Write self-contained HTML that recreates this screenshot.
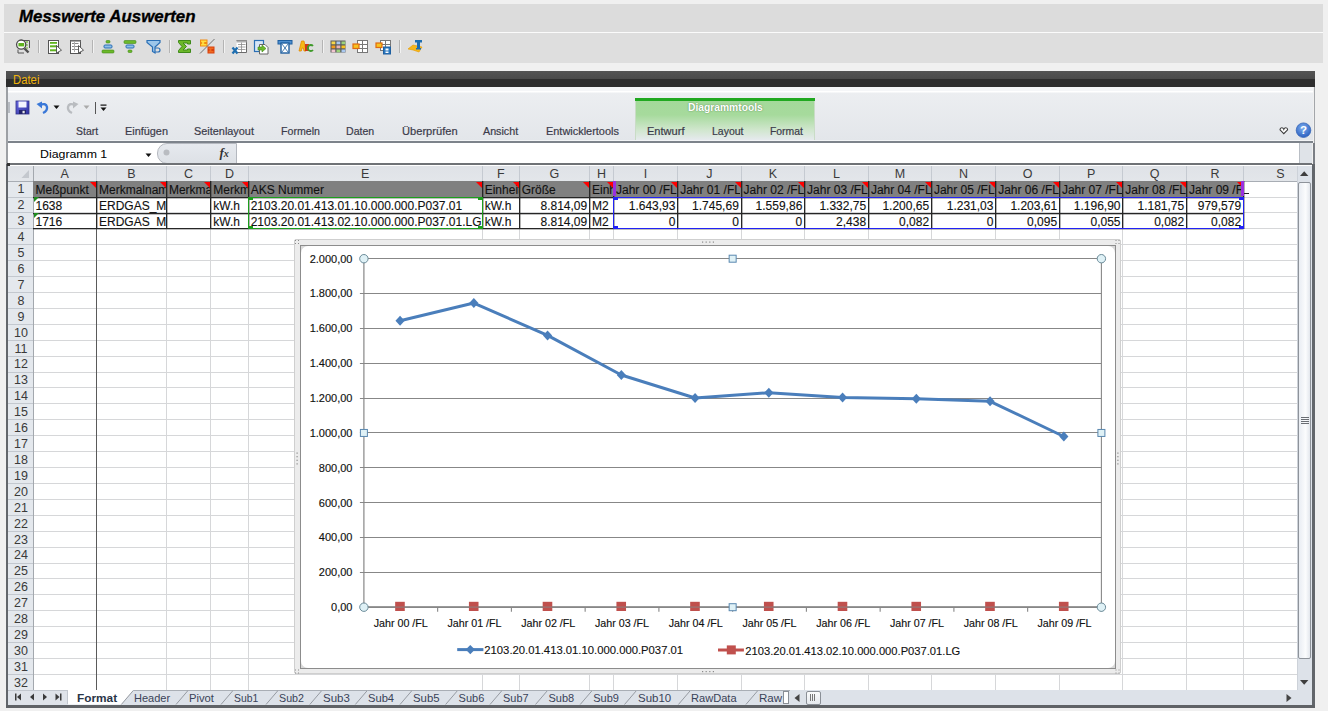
<!DOCTYPE html><html><head><meta charset="utf-8"><style>
html,body{margin:0;padding:0;width:1328px;height:711px;overflow:hidden;background:#f0f0f0}
body{position:relative;font-family:"Liberation Sans",sans-serif}
body>div,body>span,body>svg{position:absolute}
svg{overflow:visible}
</style></head><body>
<div style="left:0.00px;top:0.00px;width:1328.00px;height:711.00px;background:#f0f0f0"></div>
<div style="left:4.00px;top:4.00px;width:1319.00px;height:28.00px;background:#dcdcdc"></div>
<div style="left:4.00px;top:32.00px;width:1319.00px;height:1.00px;background:#fbfbfb"></div>
<div style="left:4.00px;top:33.00px;width:1319.00px;height:30.00px;background:#dedede"></div>
<span style="left:19.00px;top:7.31px;font-size:17px;line-height:18.99px;color:#000;white-space:nowrap;font-weight:bold;font-style:italic;transform:scaleX(0.9921);transform-origin:0 0;-webkit-text-stroke:0.35px #000;">Messwerte Auswerten</span>
<div style="left:37.50px;top:40.00px;width:1.00px;height:13.00px;background:#b4b4b4"></div>
<div style="left:38.50px;top:40.00px;width:1.00px;height:13.00px;background:#f2f2f2"></div>
<div style="left:91.50px;top:40.00px;width:1.00px;height:13.00px;background:#b4b4b4"></div>
<div style="left:92.50px;top:40.00px;width:1.00px;height:13.00px;background:#f2f2f2"></div>
<div style="left:168.50px;top:40.00px;width:1.00px;height:13.00px;background:#b4b4b4"></div>
<div style="left:169.50px;top:40.00px;width:1.00px;height:13.00px;background:#f2f2f2"></div>
<div style="left:222.90px;top:40.00px;width:1.00px;height:13.00px;background:#b4b4b4"></div>
<div style="left:223.90px;top:40.00px;width:1.00px;height:13.00px;background:#f2f2f2"></div>
<div style="left:322.20px;top:40.00px;width:1.00px;height:13.00px;background:#b4b4b4"></div>
<div style="left:323.20px;top:40.00px;width:1.00px;height:13.00px;background:#f2f2f2"></div>
<div style="left:398.50px;top:40.00px;width:1.00px;height:13.00px;background:#b4b4b4"></div>
<div style="left:399.50px;top:40.00px;width:1.00px;height:13.00px;background:#f2f2f2"></div>
<svg style="left:15px;top:39px;" width="16" height="16" viewBox="0 0 16 16"><path d="M6 1.5 H14.5 V9" fill="none" stroke="#555" stroke-width="1"/><line x1="10.5" y1="3" x2="13" y2="3" stroke="#6cb82a" stroke-width="1.2"/><line x1="11" y1="6" x2="13" y2="6" stroke="#6cb82a" stroke-width="1.2"/><line x1="11" y1="9" x2="13" y2="9" stroke="#6cb82a" stroke-width="1.2"/><circle cx="6.2" cy="5.6" r="4.6" fill="#fff" stroke="#4a4a4a" stroke-width="1.3"/><rect x="3.4" y="4" width="5.8" height="3.4" fill="#5fb31e"/><line x1="9.5" y1="9.5" x2="13.5" y2="13.5" stroke="#505050" stroke-width="2.4"/><path d="M3 10.5 V14 H9" fill="none" stroke="#555" stroke-width="1"/></svg>
<svg style="left:47px;top:39px;" width="16" height="16" viewBox="0 0 16 16"><path d="M1.5 1.5 H11.5 V6 M11.5 13 V14.5 H1.5 Z" fill="#fff" stroke="#555" stroke-width="1"/><rect x="1.5" y="1.5" width="10" height="13" fill="#fff" stroke="#555"/><rect x="3" y="3" width="7" height="1.8" fill="#5fb31e"/><rect x="3" y="6.3" width="7" height="2" fill="#5fb31e"/><rect x="3" y="10.3" width="7" height="2" fill="#5fb31e"/><path d="M9.5 6.5 L14.5 11.2 L9.5 14 Z" fill="#fff" stroke="#4a4a4a" stroke-width="0.9"/></svg>
<svg style="left:69px;top:39px;" width="16" height="16" viewBox="0 0 16 16"><rect x="1.5" y="1.5" width="10" height="13" fill="#fff" stroke="#555"/><rect x="1.5" y="1.5" width="10" height="1.2" fill="#888"/><line x1="3" y1="4.5" x2="9.5" y2="4.5" stroke="#8a8a8a"/><line x1="3" y1="7.5" x2="9.5" y2="7.5" stroke="#8a8a8a"/><line x1="3" y1="10.5" x2="9.5" y2="10.5" stroke="#8a8a8a"/><line x1="5.5" y1="3" x2="5.5" y2="13" stroke="#b0b0b0"/><path d="M9.5 6.5 L14.5 11.2 L9.5 14 Z" fill="#fff" stroke="#4a4a4a" stroke-width="0.9"/></svg>
<svg style="left:101px;top:39px;" width="16" height="16" viewBox="0 0 16 16"><rect x="5" y="1.5" width="4" height="2.5" rx="1" fill="#6cb82a" stroke="#3f8a1a" stroke-width="0.6"/><rect x="3" y="6" width="8" height="3" rx="1" fill="#8ec0e8" stroke="#2a6fb5" stroke-width="1"/><rect x="1" y="11" width="12" height="3" rx="1" fill="#6cb82a" stroke="#3f8a1a" stroke-width="0.6"/></svg>
<svg style="left:123px;top:39px;" width="16" height="16" viewBox="0 0 16 16"><rect x="1" y="1.5" width="12" height="3" rx="1" fill="#6cb82a" stroke="#3f8a1a" stroke-width="0.6"/><rect x="3" y="6" width="8" height="3" rx="1" fill="#8ec0e8" stroke="#2a6fb5" stroke-width="1"/><rect x="5" y="11" width="4" height="2.5" rx="1" fill="#6cb82a" stroke="#3f8a1a" stroke-width="0.6"/></svg>
<svg style="left:146px;top:39px;" width="16" height="16" viewBox="0 0 16 16"><path d="M1 1.5 H14 V3.5 L9 8 V14 L6.5 12.5 V8 L1 3.5 Z" fill="#9cc6ea" stroke="#2a6fb5" stroke-width="1.2"/><path d="M9 9 h3 a2 2 0 0 1 0 4 h-3" fill="none" stroke="#2a6fb5" stroke-width="1.2"/></svg>
<svg style="left:177px;top:39px;" width="16" height="16" viewBox="0 0 16 16"><path d="M1.5 1.5 H13.5 V5 H10.5 V4 H6 L9.5 7.5 L6 11 H10.5 V10 H13.5 V13.5 H1.5 V11.5 L5 7.5 L1.5 3.5 Z" fill="#6cb82a" stroke="#3f8a1a" stroke-width="1"/></svg>
<svg style="left:199px;top:38px;" width="16" height="16" viewBox="0 0 16 16"><rect x="1" y="1.5" width="7.5" height="7" fill="#f08a10"/><path d="M2 2.5 H7.5 V4 H4.5 L5.8 5 L4.5 6 H7.5 V7.5 H2 V6.5 L3.5 5 L2 3.5 Z" fill="#ffe040"/><rect x="8.5" y="8.5" width="7" height="7" fill="#d8400c"/><path d="M9.5 9.5 H14.5 V11 H11.8 L13 12 L11.8 13 H14.5 V14.5 H9.5 V13.5 L11 12 L9.5 10.5 Z" fill="#f06a20"/><line x1="1" y1="15.5" x2="15.5" y2="1" stroke="#555" stroke-width="0.8"/></svg>
<svg style="left:231px;top:39px;" width="16" height="16" viewBox="0 0 16 16"><path d="M5.5 1.5 H15.5 V13.5 H5.5" fill="#fff" stroke="#6a6a6a"/><rect x="5.5" y="1.5" width="10" height="2" fill="#b0b0b0"/><line x1="7" y1="5.5" x2="14.5" y2="5.5" stroke="#8a8a8a" stroke-width="0.8"/><line x1="7" y1="8" x2="14.5" y2="8" stroke="#8a8a8a" stroke-width="0.8"/><line x1="7" y1="10.5" x2="14.5" y2="10.5" stroke="#8a8a8a" stroke-width="0.8"/><line x1="10.5" y1="3.5" x2="10.5" y2="13" stroke="#8a8a8a" stroke-width="0.8"/><path d="M1.5 8.5 L6.5 14.5 M6.5 8.5 L1.5 14.5" stroke="#1e6eb0" stroke-width="2.3"/></svg>
<svg style="left:253px;top:39px;" width="16" height="16" viewBox="0 0 16 16"><rect x="1.5" y="1.5" width="9" height="11" fill="#d7e6f5" stroke="#2a6fb5" stroke-width="1.2"/><path d="M6.5 5.5 H12 L15 8.5 V15 H6.5 Z" fill="#fff" stroke="#666"/><path d="M5 8 H9 V6 L13 9.5 L9 13 V11 H5 Z" fill="#6cb82a" stroke="#3f8a1a" stroke-width="0.6"/></svg>
<svg style="left:277px;top:39px;" width="16" height="16" viewBox="0 0 16 16"><rect x="1" y="1.5" width="14" height="3.5" fill="#4f8fcf" stroke="#1e5fa0" stroke-width="1"/><rect x="4" y="4" width="8" height="10" fill="#fff" stroke="#1e5fa0" stroke-width="1.4"/><path d="M5 5 L11 13 M11 5 L5 13" stroke="#1e5fa0" stroke-width="0.8"/></svg>
<svg style="left:298px;top:39px;" width="16" height="16" viewBox="0 0 16 16"><path d="M1 12 L3.5 2 H6 L8 12 H6 L5.3 9 H4 L3.3 12 Z" fill="#f5b915" stroke="#e58a00" stroke-width="0.8"/><rect x="7" y="5" width="4" height="7" fill="#d0391a"/><path d="M15 7 a3 3 0 1 0 0 4" fill="none" stroke="#3f9a2a" stroke-width="1.8"/></svg>
<svg style="left:330px;top:39px;" width="16" height="16" viewBox="0 0 16 16"><rect x="0.5" y="1.5" width="15" height="12" fill="#5a5a5a"/><rect x="1.5" y="2.5" width="3.8" height="2.8" fill="#f7d84a"/><rect x="6.5" y="2.5" width="3.8" height="2.8" fill="#a9c8ef"/><rect x="11.5" y="2.5" width="3.8" height="2.8" fill="#9dd27a"/><rect x="1.5" y="6.5" width="3.8" height="2.8" fill="#f39a1a"/><rect x="6.5" y="6.5" width="3.8" height="2.8" fill="#e9b3b3"/><rect x="11.5" y="6.5" width="3.8" height="2.8" fill="#f7c320"/><rect x="1.5" y="10.5" width="3.8" height="2.8" fill="#f1c6d0"/><rect x="6.5" y="10.5" width="3.8" height="2.8" fill="#9dd27a"/><rect x="11.5" y="10.5" width="3.8" height="2.8" fill="#a9c8ef"/></svg>
<svg style="left:352px;top:39px;" width="16" height="16" viewBox="0 0 16 16"><rect x="5.5" y="1.5" width="10" height="12" fill="#fff" stroke="#777"/><line x1="10.5" y1="1.5" x2="10.5" y2="13.5" stroke="#777"/><line x1="5.5" y1="5.5" x2="15.5" y2="5.5" stroke="#777"/><line x1="5.5" y1="9.5" x2="15.5" y2="9.5" stroke="#777"/><rect x="1" y="5" width="6" height="4.5" fill="#f7c320" stroke="#e06a10" stroke-width="1.2"/></svg>
<svg style="left:375px;top:39px;" width="16" height="16" viewBox="0 0 16 16"><rect x="5.5" y="1.5" width="10" height="10" fill="#fff" stroke="#777"/><line x1="10.5" y1="1.5" x2="10.5" y2="11.5" stroke="#777"/><line x1="5.5" y1="5.5" x2="15.5" y2="5.5" stroke="#777"/><rect x="1" y="4" width="6" height="4.5" fill="#f7c320" stroke="#e06a10" stroke-width="1.2"/><rect x="8.5" y="8" width="7" height="7" fill="#2a78c0" stroke="#1e5fa0"/><rect x="10.5" y="9.5" width="3" height="2" fill="#fff"/><rect x="10.5" y="12.5" width="3" height="1.5" fill="#fff"/></svg>
<svg style="left:407px;top:39px;" width="16" height="16" viewBox="0 0 16 16"><path d="M1 10 L6 6 L15 8 L12 13 L6 11 Z" fill="#f7b71a" stroke="#e59a00" stroke-width="0.6"/><rect x="8" y="1" width="7" height="2.5" fill="#1e6eb0"/><rect x="10" y="1" width="3" height="9" fill="#1e6eb0"/><rect x="9" y="9" width="5" height="1.5" fill="#1e6eb0"/></svg>
<div style="left:6.00px;top:71.00px;width:1309.00px;height:16.00px;background:linear-gradient(#545454 0,#4a4a4a 50%,#2e2e2e 50%,#2e2e2e 100%)"></div>
<span style="left:12.70px;top:73.74px;font-size:12px;line-height:13.40px;color:#f0b40c;white-space:nowrap;transform:scaleX(0.9423);transform-origin:0 0;">Datei</span>
<div style="left:6.00px;top:87.00px;width:2.00px;height:77.00px;background:#9da0a4"></div>
<div style="left:6.00px;top:164.00px;width:2.50px;height:543.50px;background:#62666b"></div>
<div style="left:8.00px;top:87.00px;width:1305.00px;height:54.00px;background:linear-gradient(#f5f6f8 0,#f5f6f8 4px,#ffffff 4px,#ffffff 5px,#eceef1 6px,#e3e6ea 100%)"></div>
<div style="left:1313.50px;top:87.00px;width:1.80px;height:56.00px;background:#a3a6aa"></div>
<div style="left:1313.00px;top:143.00px;width:2.00px;height:21.00px;background:#7a7e84"></div>
<div style="left:1312.00px;top:164.00px;width:3.00px;height:543.50px;background:#62666b"></div>
<div style="left:8.00px;top:140.00px;width:1305.00px;height:1.00px;background:#f2f4f6"></div>
<div style="left:8.00px;top:141.30px;width:1305.00px;height:2.20px;background:#7d838b"></div>
<div style="left:8.00px;top:102.00px;width:1.50px;height:11.00px;background:#b8bcc2"></div>
<svg style="left:15px;top:100px;" width="15" height="15" viewBox="0 0 15 15"><defs><linearGradient id="fg" x1="0" y1="0" x2="1" y2="1"><stop offset="0" stop-color="#6a6ae0"/><stop offset="1" stop-color="#2e30a0"/></linearGradient></defs><rect x="1" y="1" width="13" height="13" fill="url(#fg)" stroke="#30308a" stroke-width="0.8"/><rect x="3.5" y="1.5" width="8" height="6" fill="#f4f4ff"/><rect x="4" y="10" width="7" height="4" fill="#22226a"/><rect x="7.5" y="10.8" width="2.2" height="2.5" fill="#e6e6e6"/></svg>
<svg style="left:36px;top:101px;" width="14" height="13" viewBox="0 0 14 13"><path d="M4 4 Q10 1.5 11 6 Q11.5 10 7 12" fill="none" stroke="#3a78d8" stroke-width="2.4"/><path d="M0.5 3 L6 0.5 L6 7.5 Z" fill="#3a78d8"/></svg>
<svg style="left:53px;top:105px;" width="7" height="5" viewBox="0 0 7 5"><path d="M0.5 0.5 H6.5 L3.5 4 Z" fill="#111"/></svg>
<svg style="left:65px;top:101px;" width="14" height="13" viewBox="0 0 14 13"><path d="M10 4 Q4 1.5 3 6 Q2.5 10 7 12" fill="none" stroke="#b9bcc0" stroke-width="2.4"/><path d="M13.5 3 L8 0.5 L8 7.5 Z" fill="#b9bcc0"/></svg>
<svg style="left:83px;top:105px;" width="7" height="5" viewBox="0 0 7 5"><path d="M0.5 0.5 H6.5 L3.5 4 Z" fill="#aaa"/></svg>
<div style="left:95.30px;top:102.00px;width:1.00px;height:12.00px;background:#555"></div>
<svg style="left:100px;top:104px;" width="8" height="9" viewBox="0 0 8 9"><rect x="0.5" y="0.5" width="6" height="1.2" fill="#111"/><path d="M0.5 3.5 H6.5 L3.5 7 Z" fill="#111"/></svg>
<span style="left:76.20px;top:124.64px;font-size:11px;line-height:12.29px;color:#3b3b4a;white-space:nowrap;transform:scaleX(0.9505);transform-origin:0 0;-webkit-text-stroke:0.2px #3b3b4a;">Start</span>
<span style="left:124.70px;top:124.64px;font-size:11px;line-height:12.29px;color:#3b3b4a;white-space:nowrap;transform:scaleX(0.9892);transform-origin:0 0;-webkit-text-stroke:0.2px #3b3b4a;">Einfügen</span>
<span style="left:194.20px;top:124.64px;font-size:11px;line-height:12.29px;color:#3b3b4a;white-space:nowrap;transform:scaleX(0.9902);transform-origin:0 0;-webkit-text-stroke:0.2px #3b3b4a;">Seitenlayout</span>
<span style="left:280.60px;top:124.64px;font-size:11px;line-height:12.29px;color:#3b3b4a;white-space:nowrap;transform:scaleX(0.9642);transform-origin:0 0;-webkit-text-stroke:0.2px #3b3b4a;">Formeln</span>
<span style="left:346.30px;top:124.64px;font-size:11px;line-height:12.29px;color:#3b3b4a;white-space:nowrap;transform:scaleX(0.9600);transform-origin:0 0;-webkit-text-stroke:0.2px #3b3b4a;">Daten</span>
<span style="left:401.60px;top:124.64px;font-size:11px;line-height:12.29px;color:#3b3b4a;white-space:nowrap;transform:scaleX(1.0098);transform-origin:0 0;-webkit-text-stroke:0.2px #3b3b4a;">Überprüfen</span>
<span style="left:483.40px;top:124.64px;font-size:11px;line-height:12.29px;color:#3b3b4a;white-space:nowrap;transform:scaleX(0.9752);transform-origin:0 0;-webkit-text-stroke:0.2px #3b3b4a;">Ansicht</span>
<span style="left:545.70px;top:124.64px;font-size:11px;line-height:12.29px;color:#3b3b4a;white-space:nowrap;transform:scaleX(0.9935);transform-origin:0 0;-webkit-text-stroke:0.2px #3b3b4a;">Entwicklertools</span>
<div style="left:635.00px;top:97.50px;width:180.00px;height:42.00px;background:linear-gradient(#a3d99a 0,#a6da9c 40%,#cfe6cc 75%,#e6eaee 100%);border-left:1px solid #c9dcc6;border-right:1px solid #c9dcc6;box-sizing:border-box"></div>
<div style="left:635.00px;top:97.50px;width:180.00px;height:3.20px;background:#20a820"></div>
<span style="left:687.50px;top:101.70px;font-size:10.5px;line-height:11.73px;color:#ffffff;white-space:nowrap;font-weight:bold;transform:scaleX(0.9784);transform-origin:0 0;text-shadow:0 0 1.5px #4a7a40;">Diagrammtools</span>
<span style="left:647.40px;top:124.64px;font-size:11px;line-height:12.29px;color:#3b3b4a;white-space:nowrap;transform:scaleX(1.0050);transform-origin:0 0;-webkit-text-stroke:0.2px #3b3b4a;">Entwurf</span>
<span style="left:711.80px;top:124.64px;font-size:11px;line-height:12.29px;color:#3b3b4a;white-space:nowrap;transform:scaleX(0.9527);transform-origin:0 0;-webkit-text-stroke:0.2px #3b3b4a;">Layout</span>
<span style="left:770.40px;top:124.64px;font-size:11px;line-height:12.29px;color:#3b3b4a;white-space:nowrap;transform:scaleX(0.9442);transform-origin:0 0;-webkit-text-stroke:0.2px #3b3b4a;">Format</span>
<svg style="left:1278.5px;top:126.5px;" width="10" height="8" viewBox="0 0 10 8"><path d="M1 2.8 Q1 0.8 2.8 0.8 Q4.2 0.8 4.8 2.4 Q5.4 0.8 6.8 0.8 Q8.6 0.8 8.6 2.8 L4.8 6.6 Z" fill="#fff" stroke="#3a3a3a" stroke-width="1.1"/></svg>
<svg style="left:1295px;top:121px;" width="18" height="18" viewBox="0 0 18 18"><defs><radialGradient id="hg" cx="45%" cy="35%" r="65%"><stop offset="0" stop-color="#7fb0f0"/><stop offset="1" stop-color="#2a5fc0"/></radialGradient></defs><circle cx="8.5" cy="9.2" r="7.3" fill="url(#hg)" stroke="#3a68b8" stroke-width="0.8"/><text x="8.5" y="13.4" font-family="Liberation Sans" font-weight="bold" font-size="11.5" fill="#fff" text-anchor="middle">?</text></svg>
<div style="left:8.00px;top:143.00px;width:1291.00px;height:20.00px;background:#fff"></div>
<div style="left:1299.00px;top:143.00px;width:13.00px;height:20.00px;background:#dfe3e8;border-left:1px solid #b9bec5;box-sizing:border-box"></div>
<span style="left:39.80px;top:147.77px;font-size:11.3px;line-height:12.62px;color:#000;white-space:nowrap;transform:scaleX(1.0924);transform-origin:0 0;">Diagramm 1</span>
<svg style="left:145px;top:153px;" width="7" height="5" viewBox="0 0 7 5"><path d="M0.5 0.5 H6.5 L3.5 4 Z" fill="#111"/></svg>
<div style="left:157.20px;top:143.00px;width:79.40px;height:20.50px;background:linear-gradient(#e6e9ee,#dde1e6);border:1px solid #b4b8bf;border-radius:10px 0 0 10px;box-sizing:border-box"></div>
<svg style="left:162px;top:148px;" width="9" height="9" viewBox="0 0 9 9"><circle cx="4.5" cy="4.5" r="3" fill="#b9bcc1"/></svg>
<span style="left:219.5px;top:145.5px;font-family:'Liberation Serif',serif;font-style:italic;font-weight:bold;font-size:13px;line-height:14px;color:#333">f<span style="font-size:10px;position:static">x</span></span>
<div style="left:8.00px;top:163.00px;width:1304.00px;height:1.60px;background:#6f7276"></div>
<div style="left:8.00px;top:164.60px;width:1304.00px;height:1.00px;background:#fff"></div>
<div style="left:33.00px;top:181.30px;width:1264.30px;height:508.70px;background:#fff"></div>
<div style="left:8.00px;top:165.60px;width:1289.30px;height:15.70px;background:linear-gradient(#dfe2e7,#e3e6ea)"></div>
<div style="left:8.00px;top:181.30px;width:25.00px;height:508.70px;background:#e4e8ed"></div>
<div style="left:33.00px;top:197.00px;width:1264.30px;height:1.00px;background:#d6d7d9"></div>
<div style="left:8.00px;top:197.00px;width:25.00px;height:1.00px;background:#c3c8cf"></div>
<div style="left:33.00px;top:212.00px;width:1264.30px;height:1.00px;background:#d6d7d9"></div>
<div style="left:8.00px;top:212.00px;width:25.00px;height:1.00px;background:#c3c8cf"></div>
<div style="left:33.00px;top:228.00px;width:1264.30px;height:1.00px;background:#d6d7d9"></div>
<div style="left:8.00px;top:228.00px;width:25.00px;height:1.00px;background:#c3c8cf"></div>
<div style="left:33.00px;top:244.00px;width:1264.30px;height:1.00px;background:#d6d7d9"></div>
<div style="left:8.00px;top:244.00px;width:25.00px;height:1.00px;background:#c3c8cf"></div>
<div style="left:33.00px;top:260.00px;width:1264.30px;height:1.00px;background:#d6d7d9"></div>
<div style="left:8.00px;top:260.00px;width:25.00px;height:1.00px;background:#c3c8cf"></div>
<div style="left:33.00px;top:276.00px;width:1264.30px;height:1.00px;background:#d6d7d9"></div>
<div style="left:8.00px;top:276.00px;width:25.00px;height:1.00px;background:#c3c8cf"></div>
<div style="left:33.00px;top:292.00px;width:1264.30px;height:1.00px;background:#d6d7d9"></div>
<div style="left:8.00px;top:292.00px;width:25.00px;height:1.00px;background:#c3c8cf"></div>
<div style="left:33.00px;top:308.00px;width:1264.30px;height:1.00px;background:#d6d7d9"></div>
<div style="left:8.00px;top:308.00px;width:25.00px;height:1.00px;background:#c3c8cf"></div>
<div style="left:33.00px;top:324.00px;width:1264.30px;height:1.00px;background:#d6d7d9"></div>
<div style="left:8.00px;top:324.00px;width:25.00px;height:1.00px;background:#c3c8cf"></div>
<div style="left:33.00px;top:340.00px;width:1264.30px;height:1.00px;background:#d6d7d9"></div>
<div style="left:8.00px;top:340.00px;width:25.00px;height:1.00px;background:#c3c8cf"></div>
<div style="left:33.00px;top:356.00px;width:1264.30px;height:1.00px;background:#d6d7d9"></div>
<div style="left:8.00px;top:356.00px;width:25.00px;height:1.00px;background:#c3c8cf"></div>
<div style="left:33.00px;top:372.00px;width:1264.30px;height:1.00px;background:#d6d7d9"></div>
<div style="left:8.00px;top:372.00px;width:25.00px;height:1.00px;background:#c3c8cf"></div>
<div style="left:33.00px;top:387.00px;width:1264.30px;height:1.00px;background:#d6d7d9"></div>
<div style="left:8.00px;top:387.00px;width:25.00px;height:1.00px;background:#c3c8cf"></div>
<div style="left:33.00px;top:403.00px;width:1264.30px;height:1.00px;background:#d6d7d9"></div>
<div style="left:8.00px;top:403.00px;width:25.00px;height:1.00px;background:#c3c8cf"></div>
<div style="left:33.00px;top:419.00px;width:1264.30px;height:1.00px;background:#d6d7d9"></div>
<div style="left:8.00px;top:419.00px;width:25.00px;height:1.00px;background:#c3c8cf"></div>
<div style="left:33.00px;top:435.00px;width:1264.30px;height:1.00px;background:#d6d7d9"></div>
<div style="left:8.00px;top:435.00px;width:25.00px;height:1.00px;background:#c3c8cf"></div>
<div style="left:33.00px;top:451.00px;width:1264.30px;height:1.00px;background:#d6d7d9"></div>
<div style="left:8.00px;top:451.00px;width:25.00px;height:1.00px;background:#c3c8cf"></div>
<div style="left:33.00px;top:467.00px;width:1264.30px;height:1.00px;background:#d6d7d9"></div>
<div style="left:8.00px;top:467.00px;width:25.00px;height:1.00px;background:#c3c8cf"></div>
<div style="left:33.00px;top:483.00px;width:1264.30px;height:1.00px;background:#d6d7d9"></div>
<div style="left:8.00px;top:483.00px;width:25.00px;height:1.00px;background:#c3c8cf"></div>
<div style="left:33.00px;top:499.00px;width:1264.30px;height:1.00px;background:#d6d7d9"></div>
<div style="left:8.00px;top:499.00px;width:25.00px;height:1.00px;background:#c3c8cf"></div>
<div style="left:33.00px;top:515.00px;width:1264.30px;height:1.00px;background:#d6d7d9"></div>
<div style="left:8.00px;top:515.00px;width:25.00px;height:1.00px;background:#c3c8cf"></div>
<div style="left:33.00px;top:531.00px;width:1264.30px;height:1.00px;background:#d6d7d9"></div>
<div style="left:8.00px;top:531.00px;width:25.00px;height:1.00px;background:#c3c8cf"></div>
<div style="left:33.00px;top:547.00px;width:1264.30px;height:1.00px;background:#d6d7d9"></div>
<div style="left:8.00px;top:547.00px;width:25.00px;height:1.00px;background:#c3c8cf"></div>
<div style="left:33.00px;top:563.00px;width:1264.30px;height:1.00px;background:#d6d7d9"></div>
<div style="left:8.00px;top:563.00px;width:25.00px;height:1.00px;background:#c3c8cf"></div>
<div style="left:33.00px;top:578.00px;width:1264.30px;height:1.00px;background:#d6d7d9"></div>
<div style="left:8.00px;top:578.00px;width:25.00px;height:1.00px;background:#c3c8cf"></div>
<div style="left:33.00px;top:594.00px;width:1264.30px;height:1.00px;background:#d6d7d9"></div>
<div style="left:8.00px;top:594.00px;width:25.00px;height:1.00px;background:#c3c8cf"></div>
<div style="left:33.00px;top:610.00px;width:1264.30px;height:1.00px;background:#d6d7d9"></div>
<div style="left:8.00px;top:610.00px;width:25.00px;height:1.00px;background:#c3c8cf"></div>
<div style="left:33.00px;top:626.00px;width:1264.30px;height:1.00px;background:#d6d7d9"></div>
<div style="left:8.00px;top:626.00px;width:25.00px;height:1.00px;background:#c3c8cf"></div>
<div style="left:33.00px;top:642.00px;width:1264.30px;height:1.00px;background:#d6d7d9"></div>
<div style="left:8.00px;top:642.00px;width:25.00px;height:1.00px;background:#c3c8cf"></div>
<div style="left:33.00px;top:658.00px;width:1264.30px;height:1.00px;background:#d6d7d9"></div>
<div style="left:8.00px;top:658.00px;width:25.00px;height:1.00px;background:#c3c8cf"></div>
<div style="left:33.00px;top:674.00px;width:1264.30px;height:1.00px;background:#d6d7d9"></div>
<div style="left:8.00px;top:674.00px;width:25.00px;height:1.00px;background:#c3c8cf"></div>
<div style="left:33.00px;top:690.00px;width:1264.30px;height:1.00px;background:#d6d7d9"></div>
<div style="left:8.00px;top:690.00px;width:25.00px;height:1.00px;background:#c3c8cf"></div>
<div style="left:96.00px;top:181.30px;width:1.00px;height:508.70px;background:#d6d7d9"></div>
<div style="left:165.90px;top:181.30px;width:1.00px;height:508.70px;background:#d6d7d9"></div>
<div style="left:210.30px;top:181.30px;width:1.00px;height:508.70px;background:#d6d7d9"></div>
<div style="left:247.70px;top:181.30px;width:1.00px;height:508.70px;background:#d6d7d9"></div>
<div style="left:481.70px;top:181.30px;width:1.00px;height:508.70px;background:#d6d7d9"></div>
<div style="left:518.80px;top:181.30px;width:1.00px;height:508.70px;background:#d6d7d9"></div>
<div style="left:589.00px;top:181.30px;width:1.00px;height:508.70px;background:#d6d7d9"></div>
<div style="left:613.00px;top:181.30px;width:1.00px;height:508.70px;background:#d6d7d9"></div>
<div style="left:677.20px;top:181.30px;width:1.00px;height:508.70px;background:#d6d7d9"></div>
<div style="left:740.60px;top:181.30px;width:1.00px;height:508.70px;background:#d6d7d9"></div>
<div style="left:804.10px;top:181.30px;width:1.00px;height:508.70px;background:#d6d7d9"></div>
<div style="left:867.90px;top:181.30px;width:1.00px;height:508.70px;background:#d6d7d9"></div>
<div style="left:930.90px;top:181.30px;width:1.00px;height:508.70px;background:#d6d7d9"></div>
<div style="left:995.20px;top:181.30px;width:1.00px;height:508.70px;background:#d6d7d9"></div>
<div style="left:1058.90px;top:181.30px;width:1.00px;height:508.70px;background:#d6d7d9"></div>
<div style="left:1122.30px;top:181.30px;width:1.00px;height:508.70px;background:#d6d7d9"></div>
<div style="left:1186.00px;top:181.30px;width:1.00px;height:508.70px;background:#d6d7d9"></div>
<div style="left:1242.90px;top:181.30px;width:1.00px;height:508.70px;background:#d6d7d9"></div>
<div style="left:96.00px;top:166.00px;width:1.00px;height:15.30px;background:#c5cad1"></div>
<div style="left:165.90px;top:166.00px;width:1.00px;height:15.30px;background:#c5cad1"></div>
<div style="left:210.30px;top:166.00px;width:1.00px;height:15.30px;background:#c5cad1"></div>
<div style="left:247.70px;top:166.00px;width:1.00px;height:15.30px;background:#c5cad1"></div>
<div style="left:481.70px;top:166.00px;width:1.00px;height:15.30px;background:#c5cad1"></div>
<div style="left:518.80px;top:166.00px;width:1.00px;height:15.30px;background:#c5cad1"></div>
<div style="left:589.00px;top:166.00px;width:1.00px;height:15.30px;background:#c5cad1"></div>
<div style="left:613.00px;top:166.00px;width:1.00px;height:15.30px;background:#c5cad1"></div>
<div style="left:677.20px;top:166.00px;width:1.00px;height:15.30px;background:#c5cad1"></div>
<div style="left:740.60px;top:166.00px;width:1.00px;height:15.30px;background:#c5cad1"></div>
<div style="left:804.10px;top:166.00px;width:1.00px;height:15.30px;background:#c5cad1"></div>
<div style="left:867.90px;top:166.00px;width:1.00px;height:15.30px;background:#c5cad1"></div>
<div style="left:930.90px;top:166.00px;width:1.00px;height:15.30px;background:#c5cad1"></div>
<div style="left:995.20px;top:166.00px;width:1.00px;height:15.30px;background:#c5cad1"></div>
<div style="left:1058.90px;top:166.00px;width:1.00px;height:15.30px;background:#c5cad1"></div>
<div style="left:1122.30px;top:166.00px;width:1.00px;height:15.30px;background:#c5cad1"></div>
<div style="left:1186.00px;top:166.00px;width:1.00px;height:15.30px;background:#c5cad1"></div>
<div style="left:1242.90px;top:166.00px;width:1.00px;height:15.30px;background:#c5cad1"></div>
<div style="left:32.50px;top:165.60px;width:1.00px;height:524.40px;background:#a3a8ae"></div>
<div style="left:8.00px;top:180.80px;width:1289.00px;height:1.00px;background:#a8adb4"></div>
<svg style="left:21px;top:169px;" width="9" height="10" viewBox="0 0 9 10"><path d="M8 1 V9 H0.5 Z" fill="#c4c8ce"/></svg>
<div style="left:7.00px;top:163.00px;width:2.50px;height:3.00px;background:#333"></div>
<span style="left:60.58px;top:168.29px;font-size:12.5px;line-height:13.96px;color:#3a3a3a;white-space:nowrap;">A</span>
<span style="left:127.28px;top:168.29px;font-size:12.5px;line-height:13.96px;color:#3a3a3a;white-space:nowrap;">B</span>
<span style="left:184.08px;top:168.29px;font-size:12.5px;line-height:13.96px;color:#3a3a3a;white-space:nowrap;">C</span>
<span style="left:224.98px;top:168.29px;font-size:12.5px;line-height:13.96px;color:#3a3a3a;white-space:nowrap;">D</span>
<span style="left:361.03px;top:168.29px;font-size:12.5px;line-height:13.96px;color:#3a3a3a;white-space:nowrap;">E</span>
<span style="left:496.93px;top:168.29px;font-size:12.5px;line-height:13.96px;color:#3a3a3a;white-space:nowrap;">F</span>
<span style="left:549.54px;top:168.29px;font-size:12.5px;line-height:13.96px;color:#3a3a3a;white-space:nowrap;">G</span>
<span style="left:596.98px;top:168.29px;font-size:12.5px;line-height:13.96px;color:#3a3a3a;white-space:nowrap;">H</span>
<span style="left:643.87px;top:168.29px;font-size:12.5px;line-height:13.96px;color:#3a3a3a;white-space:nowrap;">I</span>
<span style="left:706.28px;top:168.29px;font-size:12.5px;line-height:13.96px;color:#3a3a3a;white-space:nowrap;">J</span>
<span style="left:768.68px;top:168.29px;font-size:12.5px;line-height:13.96px;color:#3a3a3a;white-space:nowrap;">K</span>
<span style="left:833.02px;top:168.29px;font-size:12.5px;line-height:13.96px;color:#3a3a3a;white-space:nowrap;">L</span>
<span style="left:894.70px;top:168.29px;font-size:12.5px;line-height:13.96px;color:#3a3a3a;white-space:nowrap;">M</span>
<span style="left:959.03px;top:168.29px;font-size:12.5px;line-height:13.96px;color:#3a3a3a;white-space:nowrap;">N</span>
<span style="left:1022.69px;top:168.29px;font-size:12.5px;line-height:13.96px;color:#3a3a3a;white-space:nowrap;">O</span>
<span style="left:1086.93px;top:168.29px;font-size:12.5px;line-height:13.96px;color:#3a3a3a;white-space:nowrap;">P</span>
<span style="left:1149.79px;top:168.29px;font-size:12.5px;line-height:13.96px;color:#3a3a3a;white-space:nowrap;">Q</span>
<span style="left:1210.43px;top:168.29px;font-size:12.5px;line-height:13.96px;color:#3a3a3a;white-space:nowrap;">R</span>
<span style="left:1276.33px;top:168.29px;font-size:12.5px;line-height:13.96px;color:#3a3a3a;white-space:nowrap;">S</span>
<span style="left:17.52px;top:183.39px;font-size:12.5px;line-height:13.96px;color:#3a3a3a;white-space:nowrap;">1</span>
<span style="left:17.52px;top:199.31px;font-size:12.5px;line-height:13.96px;color:#3a3a3a;white-space:nowrap;">2</span>
<span style="left:17.52px;top:215.22px;font-size:12.5px;line-height:13.96px;color:#3a3a3a;white-space:nowrap;">3</span>
<span style="left:17.52px;top:231.14px;font-size:12.5px;line-height:13.96px;color:#3a3a3a;white-space:nowrap;">4</span>
<span style="left:17.52px;top:247.05px;font-size:12.5px;line-height:13.96px;color:#3a3a3a;white-space:nowrap;">5</span>
<span style="left:17.52px;top:262.97px;font-size:12.5px;line-height:13.96px;color:#3a3a3a;white-space:nowrap;">6</span>
<span style="left:17.52px;top:278.88px;font-size:12.5px;line-height:13.96px;color:#3a3a3a;white-space:nowrap;">7</span>
<span style="left:17.52px;top:294.80px;font-size:12.5px;line-height:13.96px;color:#3a3a3a;white-space:nowrap;">8</span>
<span style="left:17.52px;top:310.71px;font-size:12.5px;line-height:13.96px;color:#3a3a3a;white-space:nowrap;">9</span>
<span style="left:14.05px;top:326.62px;font-size:12.5px;line-height:13.96px;color:#3a3a3a;white-space:nowrap;">10</span>
<span style="left:14.51px;top:342.54px;font-size:12.5px;line-height:13.96px;color:#3a3a3a;white-space:nowrap;">11</span>
<span style="left:14.05px;top:358.45px;font-size:12.5px;line-height:13.96px;color:#3a3a3a;white-space:nowrap;">12</span>
<span style="left:14.05px;top:374.37px;font-size:12.5px;line-height:13.96px;color:#3a3a3a;white-space:nowrap;">13</span>
<span style="left:14.05px;top:390.28px;font-size:12.5px;line-height:13.96px;color:#3a3a3a;white-space:nowrap;">14</span>
<span style="left:14.05px;top:406.20px;font-size:12.5px;line-height:13.96px;color:#3a3a3a;white-space:nowrap;">15</span>
<span style="left:14.05px;top:422.11px;font-size:12.5px;line-height:13.96px;color:#3a3a3a;white-space:nowrap;">16</span>
<span style="left:14.05px;top:438.03px;font-size:12.5px;line-height:13.96px;color:#3a3a3a;white-space:nowrap;">17</span>
<span style="left:14.05px;top:453.94px;font-size:12.5px;line-height:13.96px;color:#3a3a3a;white-space:nowrap;">18</span>
<span style="left:14.05px;top:469.86px;font-size:12.5px;line-height:13.96px;color:#3a3a3a;white-space:nowrap;">19</span>
<span style="left:14.05px;top:485.77px;font-size:12.5px;line-height:13.96px;color:#3a3a3a;white-space:nowrap;">20</span>
<span style="left:14.05px;top:501.69px;font-size:12.5px;line-height:13.96px;color:#3a3a3a;white-space:nowrap;">21</span>
<span style="left:14.05px;top:517.60px;font-size:12.5px;line-height:13.96px;color:#3a3a3a;white-space:nowrap;">22</span>
<span style="left:14.05px;top:533.52px;font-size:12.5px;line-height:13.96px;color:#3a3a3a;white-space:nowrap;">23</span>
<span style="left:14.05px;top:549.43px;font-size:12.5px;line-height:13.96px;color:#3a3a3a;white-space:nowrap;">24</span>
<span style="left:14.05px;top:565.35px;font-size:12.5px;line-height:13.96px;color:#3a3a3a;white-space:nowrap;">25</span>
<span style="left:14.05px;top:581.26px;font-size:12.5px;line-height:13.96px;color:#3a3a3a;white-space:nowrap;">26</span>
<span style="left:14.05px;top:597.17px;font-size:12.5px;line-height:13.96px;color:#3a3a3a;white-space:nowrap;">27</span>
<span style="left:14.05px;top:613.09px;font-size:12.5px;line-height:13.96px;color:#3a3a3a;white-space:nowrap;">28</span>
<span style="left:14.05px;top:629.00px;font-size:12.5px;line-height:13.96px;color:#3a3a3a;white-space:nowrap;">29</span>
<span style="left:14.05px;top:644.92px;font-size:12.5px;line-height:13.96px;color:#3a3a3a;white-space:nowrap;">30</span>
<span style="left:14.05px;top:660.83px;font-size:12.5px;line-height:13.96px;color:#3a3a3a;white-space:nowrap;">31</span>
<span style="left:14.05px;top:676.75px;font-size:12.5px;line-height:13.96px;color:#3a3a3a;white-space:nowrap;">32</span>
<div style="left:96.00px;top:181.30px;width:1.30px;height:508.70px;background:#5a5a5a"></div>
<div style="left:33.00px;top:181.30px;width:1210.40px;height:15.91px;background:#808080"></div>
<div style="left:96.00px;top:181.30px;width:1.00px;height:47.35px;background:#262626"></div>
<div style="left:97.00px;top:181.30px;width:1.00px;height:47.35px;background:rgba(40,40,40,0.35)"></div>
<div style="left:166.00px;top:181.30px;width:1.00px;height:47.35px;background:#262626"></div>
<div style="left:167.00px;top:181.30px;width:1.00px;height:47.35px;background:rgba(40,40,40,0.35)"></div>
<div style="left:210.00px;top:181.30px;width:1.00px;height:47.35px;background:#262626"></div>
<div style="left:211.00px;top:181.30px;width:1.00px;height:47.35px;background:rgba(40,40,40,0.35)"></div>
<div style="left:248.00px;top:181.30px;width:1.00px;height:47.35px;background:#262626"></div>
<div style="left:249.00px;top:181.30px;width:1.00px;height:47.35px;background:rgba(40,40,40,0.35)"></div>
<div style="left:482.00px;top:181.30px;width:1.00px;height:47.35px;background:#262626"></div>
<div style="left:483.00px;top:181.30px;width:1.00px;height:47.35px;background:rgba(40,40,40,0.35)"></div>
<div style="left:519.00px;top:181.30px;width:1.00px;height:47.35px;background:#262626"></div>
<div style="left:520.00px;top:181.30px;width:1.00px;height:47.35px;background:rgba(40,40,40,0.35)"></div>
<div style="left:589.00px;top:181.30px;width:1.00px;height:47.35px;background:#262626"></div>
<div style="left:590.00px;top:181.30px;width:1.00px;height:47.35px;background:rgba(40,40,40,0.35)"></div>
<div style="left:613.00px;top:181.30px;width:1.00px;height:47.35px;background:#262626"></div>
<div style="left:614.00px;top:181.30px;width:1.00px;height:47.35px;background:rgba(40,40,40,0.35)"></div>
<div style="left:677.00px;top:181.30px;width:1.00px;height:47.35px;background:#262626"></div>
<div style="left:678.00px;top:181.30px;width:1.00px;height:47.35px;background:rgba(40,40,40,0.35)"></div>
<div style="left:741.00px;top:181.30px;width:1.00px;height:47.35px;background:#262626"></div>
<div style="left:742.00px;top:181.30px;width:1.00px;height:47.35px;background:rgba(40,40,40,0.35)"></div>
<div style="left:804.00px;top:181.30px;width:1.00px;height:47.35px;background:#262626"></div>
<div style="left:805.00px;top:181.30px;width:1.00px;height:47.35px;background:rgba(40,40,40,0.35)"></div>
<div style="left:868.00px;top:181.30px;width:1.00px;height:47.35px;background:#262626"></div>
<div style="left:869.00px;top:181.30px;width:1.00px;height:47.35px;background:rgba(40,40,40,0.35)"></div>
<div style="left:931.00px;top:181.30px;width:1.00px;height:47.35px;background:#262626"></div>
<div style="left:932.00px;top:181.30px;width:1.00px;height:47.35px;background:rgba(40,40,40,0.35)"></div>
<div style="left:995.00px;top:181.30px;width:1.00px;height:47.35px;background:#262626"></div>
<div style="left:996.00px;top:181.30px;width:1.00px;height:47.35px;background:rgba(40,40,40,0.35)"></div>
<div style="left:1059.00px;top:181.30px;width:1.00px;height:47.35px;background:#262626"></div>
<div style="left:1060.00px;top:181.30px;width:1.00px;height:47.35px;background:rgba(40,40,40,0.35)"></div>
<div style="left:1122.00px;top:181.30px;width:1.00px;height:47.35px;background:#262626"></div>
<div style="left:1123.00px;top:181.30px;width:1.00px;height:47.35px;background:rgba(40,40,40,0.35)"></div>
<div style="left:1186.00px;top:181.30px;width:1.00px;height:47.35px;background:#262626"></div>
<div style="left:1187.00px;top:181.30px;width:1.00px;height:47.35px;background:rgba(40,40,40,0.35)"></div>
<div style="left:1243.00px;top:181.30px;width:1.00px;height:47.35px;background:#262626"></div>
<div style="left:1244.00px;top:181.30px;width:1.00px;height:47.35px;background:rgba(40,40,40,0.35)"></div>
<div style="left:33.00px;top:197.00px;width:1210.40px;height:1.00px;background:#262626"></div>
<div style="left:33.00px;top:198.00px;width:1210.40px;height:1.00px;background:rgba(40,40,40,0.3)"></div>
<div style="left:33.00px;top:213.00px;width:1210.40px;height:1.00px;background:#262626"></div>
<div style="left:33.00px;top:214.00px;width:1210.40px;height:1.00px;background:rgba(40,40,40,0.3)"></div>
<div style="left:33.00px;top:228.00px;width:1210.40px;height:1.00px;background:#262626"></div>
<div style="left:33.00px;top:229.00px;width:1210.40px;height:1.00px;background:rgba(40,40,40,0.3)"></div>
<div style="left:33.60px;top:182.04px;width:62.30px;height:17.40px;overflow:hidden"><span style="position:absolute;left:1.90px;top:2px;font-size:12px;line-height:13.40px;color:#111;white-space:nowrap;-webkit-text-stroke:0.12px #111;">Meßpunkt</span></div>
<div style="left:97.10px;top:182.04px;width:68.70px;height:17.40px;overflow:hidden"><span style="position:absolute;left:1.90px;top:2px;font-size:12px;line-height:13.40px;color:#111;white-space:nowrap;-webkit-text-stroke:0.12px #111;">Merkmalname</span></div>
<div style="left:167.00px;top:182.04px;width:43.20px;height:17.40px;overflow:hidden"><span style="position:absolute;left:1.90px;top:2px;font-size:12px;line-height:13.40px;color:#111;white-space:nowrap;-webkit-text-stroke:0.12px #111;">Merkmal</span></div>
<div style="left:211.40px;top:182.04px;width:36.20px;height:17.40px;overflow:hidden"><span style="position:absolute;left:1.90px;top:2px;font-size:12px;line-height:13.40px;color:#111;white-space:nowrap;-webkit-text-stroke:0.12px #111;">Merkmal</span></div>
<div style="left:248.80px;top:182.04px;width:232.80px;height:17.40px;overflow:hidden"><span style="position:absolute;left:1.90px;top:2px;font-size:12px;line-height:13.40px;color:#111;white-space:nowrap;-webkit-text-stroke:0.12px #111;">AKS Nummer</span></div>
<div style="left:482.80px;top:182.04px;width:35.90px;height:17.40px;overflow:hidden"><span style="position:absolute;left:1.90px;top:2px;font-size:12px;line-height:13.40px;color:#111;white-space:nowrap;-webkit-text-stroke:0.12px #111;">Einheit</span></div>
<div style="left:519.90px;top:182.04px;width:69.00px;height:17.40px;overflow:hidden"><span style="position:absolute;left:1.90px;top:2px;font-size:12px;line-height:13.40px;color:#111;white-space:nowrap;-webkit-text-stroke:0.12px #111;">Größe</span></div>
<div style="left:590.10px;top:182.04px;width:22.80px;height:17.40px;overflow:hidden"><span style="position:absolute;left:1.90px;top:2px;font-size:12px;line-height:13.40px;color:#111;white-space:nowrap;-webkit-text-stroke:0.12px #111;">Einheit</span></div>
<div style="left:614.10px;top:182.04px;width:63.00px;height:17.40px;overflow:hidden"><span style="position:absolute;left:1.90px;top:2px;font-size:12px;line-height:13.40px;color:#111;white-space:nowrap;-webkit-text-stroke:0.12px #111;">Jahr 00 /FL</span></div>
<div style="left:678.30px;top:182.04px;width:62.20px;height:17.40px;overflow:hidden"><span style="position:absolute;left:1.90px;top:2px;font-size:12px;line-height:13.40px;color:#111;white-space:nowrap;-webkit-text-stroke:0.12px #111;">Jahr 01 /FL</span></div>
<div style="left:741.70px;top:182.04px;width:62.30px;height:17.40px;overflow:hidden"><span style="position:absolute;left:1.90px;top:2px;font-size:12px;line-height:13.40px;color:#111;white-space:nowrap;-webkit-text-stroke:0.12px #111;">Jahr 02 /FL</span></div>
<div style="left:805.20px;top:182.04px;width:62.60px;height:17.40px;overflow:hidden"><span style="position:absolute;left:1.90px;top:2px;font-size:12px;line-height:13.40px;color:#111;white-space:nowrap;-webkit-text-stroke:0.12px #111;">Jahr 03 /FL</span></div>
<div style="left:869.00px;top:182.04px;width:61.80px;height:17.40px;overflow:hidden"><span style="position:absolute;left:1.90px;top:2px;font-size:12px;line-height:13.40px;color:#111;white-space:nowrap;-webkit-text-stroke:0.12px #111;">Jahr 04 /FL</span></div>
<div style="left:932.00px;top:182.04px;width:63.10px;height:17.40px;overflow:hidden"><span style="position:absolute;left:1.90px;top:2px;font-size:12px;line-height:13.40px;color:#111;white-space:nowrap;-webkit-text-stroke:0.12px #111;">Jahr 05 /FL</span></div>
<div style="left:996.30px;top:182.04px;width:62.50px;height:17.40px;overflow:hidden"><span style="position:absolute;left:1.90px;top:2px;font-size:12px;line-height:13.40px;color:#111;white-space:nowrap;-webkit-text-stroke:0.12px #111;">Jahr 06 /FL</span></div>
<div style="left:1060.00px;top:182.04px;width:62.20px;height:17.40px;overflow:hidden"><span style="position:absolute;left:1.90px;top:2px;font-size:12px;line-height:13.40px;color:#111;white-space:nowrap;-webkit-text-stroke:0.12px #111;">Jahr 07 /FL</span></div>
<div style="left:1123.40px;top:182.04px;width:62.50px;height:17.40px;overflow:hidden"><span style="position:absolute;left:1.90px;top:2px;font-size:12px;line-height:13.40px;color:#111;white-space:nowrap;-webkit-text-stroke:0.12px #111;">Jahr 08 /FL</span></div>
<div style="left:1187.10px;top:182.04px;width:55.70px;height:17.40px;overflow:hidden"><span style="position:absolute;left:1.90px;top:2px;font-size:12px;line-height:13.40px;color:#111;white-space:nowrap;-webkit-text-stroke:0.12px #111;">Jahr 09 /FL</span></div>
<div style="left:33.60px;top:197.96px;width:62.30px;height:17.40px;overflow:hidden"><span style="position:absolute;left:1.90px;top:2px;font-size:12px;line-height:13.40px;color:#111;white-space:nowrap;-webkit-text-stroke:0.12px #111;">1638</span></div>
<div style="left:97.10px;top:197.96px;width:68.70px;height:17.40px;overflow:hidden"><span style="position:absolute;left:1.90px;top:2px;font-size:12px;line-height:13.40px;color:#111;white-space:nowrap;-webkit-text-stroke:0.12px #111;">ERDGAS_MESSUNG</span></div>
<div style="left:211.40px;top:197.96px;width:36.20px;height:17.40px;overflow:hidden"><span style="position:absolute;left:1.90px;top:2px;font-size:12px;line-height:13.40px;color:#111;white-space:nowrap;-webkit-text-stroke:0.12px #111;">kW.h</span></div>
<div style="left:248.80px;top:197.96px;width:232.80px;height:17.40px;overflow:hidden"><span style="position:absolute;left:1.90px;top:2px;font-size:12px;line-height:13.40px;color:#111;white-space:nowrap;-webkit-text-stroke:0.12px #111;">2103.20.01.413.01.10.000.000.P037.01</span></div>
<div style="left:482.80px;top:197.96px;width:35.90px;height:17.40px;overflow:hidden"><span style="position:absolute;left:1.90px;top:2px;font-size:12px;line-height:13.40px;color:#111;white-space:nowrap;-webkit-text-stroke:0.12px #111;">kW.h</span></div>
<div style="left:519.90px;top:197.96px;width:69.00px;height:17.40px;overflow:hidden"><span style="position:absolute;left:20.61px;top:2px;font-size:12px;line-height:13.40px;color:#111;white-space:nowrap;-webkit-text-stroke:0.12px #111;">8.814,09</span></div>
<div style="left:590.10px;top:197.96px;width:22.80px;height:17.40px;overflow:hidden"><span style="position:absolute;left:1.90px;top:2px;font-size:12px;line-height:13.40px;color:#111;white-space:nowrap;-webkit-text-stroke:0.12px #111;">M2</span></div>
<div style="left:614.10px;top:197.96px;width:63.00px;height:17.40px;overflow:hidden"><span style="position:absolute;left:14.61px;top:2px;font-size:12px;line-height:13.40px;color:#111;white-space:nowrap;-webkit-text-stroke:0.12px #111;">1.643,93</span></div>
<div style="left:678.30px;top:197.96px;width:62.20px;height:17.40px;overflow:hidden"><span style="position:absolute;left:13.81px;top:2px;font-size:12px;line-height:13.40px;color:#111;white-space:nowrap;-webkit-text-stroke:0.12px #111;">1.745,69</span></div>
<div style="left:741.70px;top:197.96px;width:62.30px;height:17.40px;overflow:hidden"><span style="position:absolute;left:13.91px;top:2px;font-size:12px;line-height:13.40px;color:#111;white-space:nowrap;-webkit-text-stroke:0.12px #111;">1.559,86</span></div>
<div style="left:805.20px;top:197.96px;width:62.60px;height:17.40px;overflow:hidden"><span style="position:absolute;left:14.21px;top:2px;font-size:12px;line-height:13.40px;color:#111;white-space:nowrap;-webkit-text-stroke:0.12px #111;">1.332,75</span></div>
<div style="left:869.00px;top:197.96px;width:61.80px;height:17.40px;overflow:hidden"><span style="position:absolute;left:13.41px;top:2px;font-size:12px;line-height:13.40px;color:#111;white-space:nowrap;-webkit-text-stroke:0.12px #111;">1.200,65</span></div>
<div style="left:932.00px;top:197.96px;width:63.10px;height:17.40px;overflow:hidden"><span style="position:absolute;left:14.71px;top:2px;font-size:12px;line-height:13.40px;color:#111;white-space:nowrap;-webkit-text-stroke:0.12px #111;">1.231,03</span></div>
<div style="left:996.30px;top:197.96px;width:62.50px;height:17.40px;overflow:hidden"><span style="position:absolute;left:14.11px;top:2px;font-size:12px;line-height:13.40px;color:#111;white-space:nowrap;-webkit-text-stroke:0.12px #111;">1.203,61</span></div>
<div style="left:1060.00px;top:197.96px;width:62.20px;height:17.40px;overflow:hidden"><span style="position:absolute;left:13.81px;top:2px;font-size:12px;line-height:13.40px;color:#111;white-space:nowrap;-webkit-text-stroke:0.12px #111;">1.196,90</span></div>
<div style="left:1123.40px;top:197.96px;width:62.50px;height:17.40px;overflow:hidden"><span style="position:absolute;left:14.11px;top:2px;font-size:12px;line-height:13.40px;color:#111;white-space:nowrap;-webkit-text-stroke:0.12px #111;">1.181,75</span></div>
<div style="left:1187.10px;top:197.96px;width:55.70px;height:17.40px;overflow:hidden"><span style="position:absolute;left:10.64px;top:2px;font-size:12px;line-height:13.40px;color:#111;white-space:nowrap;-webkit-text-stroke:0.12px #111;">979,579</span></div>
<div style="left:33.60px;top:213.87px;width:62.30px;height:17.40px;overflow:hidden"><span style="position:absolute;left:1.90px;top:2px;font-size:12px;line-height:13.40px;color:#111;white-space:nowrap;-webkit-text-stroke:0.12px #111;">1716</span></div>
<div style="left:97.10px;top:213.87px;width:68.70px;height:17.40px;overflow:hidden"><span style="position:absolute;left:1.90px;top:2px;font-size:12px;line-height:13.40px;color:#111;white-space:nowrap;-webkit-text-stroke:0.12px #111;">ERDGAS_MESSUNG</span></div>
<div style="left:211.40px;top:213.87px;width:36.20px;height:17.40px;overflow:hidden"><span style="position:absolute;left:1.90px;top:2px;font-size:12px;line-height:13.40px;color:#111;white-space:nowrap;-webkit-text-stroke:0.12px #111;">kW.h</span></div>
<div style="left:248.80px;top:213.87px;width:232.80px;height:17.40px;overflow:hidden"><span style="position:absolute;left:1.90px;top:2px;font-size:12px;line-height:13.40px;color:#111;white-space:nowrap;-webkit-text-stroke:0.12px #111;">2103.20.01.413.02.10.000.000.P037.01.LG</span></div>
<div style="left:482.80px;top:213.87px;width:35.90px;height:17.40px;overflow:hidden"><span style="position:absolute;left:1.90px;top:2px;font-size:12px;line-height:13.40px;color:#111;white-space:nowrap;-webkit-text-stroke:0.12px #111;">kW.h</span></div>
<div style="left:519.90px;top:213.87px;width:69.00px;height:17.40px;overflow:hidden"><span style="position:absolute;left:20.61px;top:2px;font-size:12px;line-height:13.40px;color:#111;white-space:nowrap;-webkit-text-stroke:0.12px #111;">8.814,09</span></div>
<div style="left:590.10px;top:213.87px;width:22.80px;height:17.40px;overflow:hidden"><span style="position:absolute;left:1.90px;top:2px;font-size:12px;line-height:13.40px;color:#111;white-space:nowrap;-webkit-text-stroke:0.12px #111;">M2</span></div>
<div style="left:614.10px;top:213.87px;width:63.00px;height:17.40px;overflow:hidden"><span style="position:absolute;left:54.63px;top:2px;font-size:12px;line-height:13.40px;color:#111;white-space:nowrap;-webkit-text-stroke:0.12px #111;">0</span></div>
<div style="left:678.30px;top:213.87px;width:62.20px;height:17.40px;overflow:hidden"><span style="position:absolute;left:53.83px;top:2px;font-size:12px;line-height:13.40px;color:#111;white-space:nowrap;-webkit-text-stroke:0.12px #111;">0</span></div>
<div style="left:741.70px;top:213.87px;width:62.30px;height:17.40px;overflow:hidden"><span style="position:absolute;left:53.93px;top:2px;font-size:12px;line-height:13.40px;color:#111;white-space:nowrap;-webkit-text-stroke:0.12px #111;">0</span></div>
<div style="left:805.20px;top:213.87px;width:62.60px;height:17.40px;overflow:hidden"><span style="position:absolute;left:30.88px;top:2px;font-size:12px;line-height:13.40px;color:#111;white-space:nowrap;-webkit-text-stroke:0.12px #111;">2,438</span></div>
<div style="left:869.00px;top:213.87px;width:61.80px;height:17.40px;overflow:hidden"><span style="position:absolute;left:30.08px;top:2px;font-size:12px;line-height:13.40px;color:#111;white-space:nowrap;-webkit-text-stroke:0.12px #111;">0,082</span></div>
<div style="left:932.00px;top:213.87px;width:63.10px;height:17.40px;overflow:hidden"><span style="position:absolute;left:54.73px;top:2px;font-size:12px;line-height:13.40px;color:#111;white-space:nowrap;-webkit-text-stroke:0.12px #111;">0</span></div>
<div style="left:996.30px;top:213.87px;width:62.50px;height:17.40px;overflow:hidden"><span style="position:absolute;left:30.78px;top:2px;font-size:12px;line-height:13.40px;color:#111;white-space:nowrap;-webkit-text-stroke:0.12px #111;">0,095</span></div>
<div style="left:1060.00px;top:213.87px;width:62.20px;height:17.40px;overflow:hidden"><span style="position:absolute;left:30.48px;top:2px;font-size:12px;line-height:13.40px;color:#111;white-space:nowrap;-webkit-text-stroke:0.12px #111;">0,055</span></div>
<div style="left:1123.40px;top:213.87px;width:62.50px;height:17.40px;overflow:hidden"><span style="position:absolute;left:30.78px;top:2px;font-size:12px;line-height:13.40px;color:#111;white-space:nowrap;-webkit-text-stroke:0.12px #111;">0,082</span></div>
<div style="left:1187.10px;top:213.87px;width:55.70px;height:17.40px;overflow:hidden"><span style="position:absolute;left:23.98px;top:2px;font-size:12px;line-height:13.40px;color:#111;white-space:nowrap;-webkit-text-stroke:0.12px #111;">0,082</span></div>
<svg style="left:90.0px;top:181.5px;" width="6" height="6" viewBox="0 0 6 6"><path d="M0 0 H6 V6 Z" fill="#f00"/></svg>
<svg style="left:159.9px;top:181.5px;" width="6" height="6" viewBox="0 0 6 6"><path d="M0 0 H6 V6 Z" fill="#f00"/></svg>
<svg style="left:204.3px;top:181.5px;" width="6" height="6" viewBox="0 0 6 6"><path d="M0 0 H6 V6 Z" fill="#f00"/></svg>
<svg style="left:241.7px;top:181.5px;" width="6" height="6" viewBox="0 0 6 6"><path d="M0 0 H6 V6 Z" fill="#f00"/></svg>
<svg style="left:475.7px;top:181.5px;" width="6" height="6" viewBox="0 0 6 6"><path d="M0 0 H6 V6 Z" fill="#f00"/></svg>
<svg style="left:512.8px;top:181.5px;" width="6" height="6" viewBox="0 0 6 6"><path d="M0 0 H6 V6 Z" fill="#f00"/></svg>
<svg style="left:583.0px;top:181.5px;" width="6" height="6" viewBox="0 0 6 6"><path d="M0 0 H6 V6 Z" fill="#f00"/></svg>
<svg style="left:607.0px;top:181.5px;" width="6" height="6" viewBox="0 0 6 6"><path d="M0 0 H6 V6 Z" fill="#f00"/></svg>
<svg style="left:671.2px;top:181.5px;" width="6" height="6" viewBox="0 0 6 6"><path d="M0 0 H6 V6 Z" fill="#f00"/></svg>
<svg style="left:734.6px;top:181.5px;" width="6" height="6" viewBox="0 0 6 6"><path d="M0 0 H6 V6 Z" fill="#f00"/></svg>
<svg style="left:798.1px;top:181.5px;" width="6" height="6" viewBox="0 0 6 6"><path d="M0 0 H6 V6 Z" fill="#f00"/></svg>
<svg style="left:861.9px;top:181.5px;" width="6" height="6" viewBox="0 0 6 6"><path d="M0 0 H6 V6 Z" fill="#f00"/></svg>
<svg style="left:924.9px;top:181.5px;" width="6" height="6" viewBox="0 0 6 6"><path d="M0 0 H6 V6 Z" fill="#f00"/></svg>
<svg style="left:989.2px;top:181.5px;" width="6" height="6" viewBox="0 0 6 6"><path d="M0 0 H6 V6 Z" fill="#f00"/></svg>
<svg style="left:1052.9px;top:181.5px;" width="6" height="6" viewBox="0 0 6 6"><path d="M0 0 H6 V6 Z" fill="#f00"/></svg>
<svg style="left:1116.3px;top:181.5px;" width="6" height="6" viewBox="0 0 6 6"><path d="M0 0 H6 V6 Z" fill="#f00"/></svg>
<svg style="left:1180.0px;top:181.5px;" width="6" height="6" viewBox="0 0 6 6"><path d="M0 0 H6 V6 Z" fill="#f00"/></svg>
<svg style="left:1236.9px;top:181.5px;" width="6" height="6" viewBox="0 0 6 6"><path d="M0 0 H6 V6 Z" fill="#f00"/></svg>
<svg style="left:33.5px;top:197.0194px;" width="6" height="6" viewBox="0 0 6 6"><path d="M0 0 H5 L0 5 Z" fill="#1e8c1e"/></svg>
<svg style="left:33.5px;top:212.9341px;" width="6" height="6" viewBox="0 0 6 6"><path d="M0 0 H5 L0 5 Z" fill="#1e8c1e"/></svg>
<div style="left:248.00px;top:197.00px;width:234.50px;height:1.00px;background:#1c9e1c"></div>
<div style="left:248.00px;top:228.00px;width:234.50px;height:1.00px;background:#1c9e1c"></div>
<div style="left:248.00px;top:197.00px;width:1.00px;height:32.00px;background:#1c9e1c"></div>
<div style="left:481.50px;top:197.00px;width:1.00px;height:32.00px;background:#1c9e1c"></div>
<div style="left:248.00px;top:196.50px;width:4.50px;height:3.50px;background:#1c9e1c"></div>
<div style="left:248.00px;top:225.50px;width:4.50px;height:3.50px;background:#1c9e1c"></div>
<div style="left:478.00px;top:196.50px;width:4.50px;height:3.50px;background:#1c9e1c"></div>
<div style="left:478.00px;top:225.50px;width:4.50px;height:3.50px;background:#1c9e1c"></div>
<div style="left:613.00px;top:197.00px;width:630.50px;height:1.00px;background:#2222f5"></div>
<div style="left:613.00px;top:228.00px;width:630.50px;height:1.00px;background:#2222f5"></div>
<div style="left:613.00px;top:197.00px;width:1.00px;height:32.00px;background:#2222f5"></div>
<div style="left:1242.50px;top:197.00px;width:1.00px;height:32.00px;background:#2222f5"></div>
<div style="left:613.00px;top:196.50px;width:4.50px;height:3.50px;background:#2222f5"></div>
<div style="left:613.00px;top:225.50px;width:4.50px;height:3.50px;background:#2222f5"></div>
<div style="left:1239.00px;top:196.50px;width:4.50px;height:3.50px;background:#2222f5"></div>
<div style="left:1239.00px;top:225.50px;width:4.50px;height:3.50px;background:#2222f5"></div>
<div style="left:612.70px;top:181.40px;width:3.50px;height:14.91px;background:#9a30e0"></div>
<div style="left:1241.00px;top:181.40px;width:3.20px;height:14.91px;background:#9a30e0"></div>
<div style="left:1244.40px;top:192.90px;width:5.00px;height:1.00px;background:#222"></div>
<div style="left:294.00px;top:239.30px;width:826.80px;height:435.20px;background:#ececec;border:1px solid #cfcfcf;border-radius:2px;box-sizing:border-box"></div>
<div style="left:300.20px;top:245.20px;width:815.50px;height:423.80px;background:#d9d9d9;border:1px solid #8c8c8c;box-sizing:border-box"></div>
<div style="left:301.20px;top:246.20px;width:813.50px;height:421.80px;background:#fff;border-radius:7px"></div>
<svg style="left:0;top:0" width="1328" height="711"><rect x="295.0" y="240.0" width="1" height="1" fill="#8a8a8a"/><rect x="298.0" y="240.0" width="1" height="1" fill="#8a8a8a"/><rect x="295.0" y="243.0" width="1" height="1" fill="#8a8a8a"/><rect x="298.0" y="243.0" width="1" height="1" fill="#8a8a8a"/><rect x="295.0" y="669.5" width="1" height="1" fill="#8a8a8a"/><rect x="298.0" y="669.5" width="1" height="1" fill="#8a8a8a"/><rect x="295.0" y="672.5" width="1" height="1" fill="#8a8a8a"/><rect x="298.0" y="672.5" width="1" height="1" fill="#8a8a8a"/><rect x="1115.5" y="240.0" width="1" height="1" fill="#8a8a8a"/><rect x="1118.5" y="240.0" width="1" height="1" fill="#8a8a8a"/><rect x="1115.5" y="243.0" width="1" height="1" fill="#8a8a8a"/><rect x="1118.5" y="243.0" width="1" height="1" fill="#8a8a8a"/><rect x="1115.5" y="669.5" width="1" height="1" fill="#8a8a8a"/><rect x="1118.5" y="669.5" width="1" height="1" fill="#8a8a8a"/><rect x="1115.5" y="672.5" width="1" height="1" fill="#8a8a8a"/><rect x="1118.5" y="672.5" width="1" height="1" fill="#8a8a8a"/><rect x="702.0" y="241.5" width="1.2" height="1.2" fill="#8a8a8a"/><rect x="702.0" y="671" width="1.2" height="1.2" fill="#8a8a8a"/><rect x="296.5" y="452.5" width="1.2" height="1.2" fill="#8a8a8a"/><rect x="1117.3" y="452.5" width="1.2" height="1.2" fill="#8a8a8a"/><rect x="705.6" y="241.5" width="1.2" height="1.2" fill="#8a8a8a"/><rect x="705.6" y="671" width="1.2" height="1.2" fill="#8a8a8a"/><rect x="296.5" y="456.1" width="1.2" height="1.2" fill="#8a8a8a"/><rect x="1117.3" y="456.1" width="1.2" height="1.2" fill="#8a8a8a"/><rect x="709.2" y="241.5" width="1.2" height="1.2" fill="#8a8a8a"/><rect x="709.2" y="671" width="1.2" height="1.2" fill="#8a8a8a"/><rect x="296.5" y="459.7" width="1.2" height="1.2" fill="#8a8a8a"/><rect x="1117.3" y="459.7" width="1.2" height="1.2" fill="#8a8a8a"/><rect x="712.8" y="241.5" width="1.2" height="1.2" fill="#8a8a8a"/><rect x="712.8" y="671" width="1.2" height="1.2" fill="#8a8a8a"/><rect x="296.5" y="463.3" width="1.2" height="1.2" fill="#8a8a8a"/><rect x="1117.3" y="463.3" width="1.2" height="1.2" fill="#8a8a8a"/></svg>
<svg style="left:0;top:0" width="1328" height="711"><line x1="359.9" y1="258.50" x2="1101.4" y2="258.50" stroke="#878787" stroke-width="1"/><text x="352.5" y="262.60" font-family="Liberation Sans" font-size="11" fill="#111" stroke="#111" stroke-width="0.15" text-anchor="end">2.000,00</text><line x1="359.9" y1="293.50" x2="1101.4" y2="293.50" stroke="#878787" stroke-width="1"/><text x="352.5" y="297.45" font-family="Liberation Sans" font-size="11" fill="#111" stroke="#111" stroke-width="0.15" text-anchor="end">1.800,00</text><line x1="359.9" y1="328.50" x2="1101.4" y2="328.50" stroke="#878787" stroke-width="1"/><text x="352.5" y="332.30" font-family="Liberation Sans" font-size="11" fill="#111" stroke="#111" stroke-width="0.15" text-anchor="end">1.600,00</text><line x1="359.9" y1="363.50" x2="1101.4" y2="363.50" stroke="#878787" stroke-width="1"/><text x="352.5" y="367.15" font-family="Liberation Sans" font-size="11" fill="#111" stroke="#111" stroke-width="0.15" text-anchor="end">1.400,00</text><line x1="359.9" y1="398.50" x2="1101.4" y2="398.50" stroke="#878787" stroke-width="1"/><text x="352.5" y="402.00" font-family="Liberation Sans" font-size="11" fill="#111" stroke="#111" stroke-width="0.15" text-anchor="end">1.200,00</text><line x1="359.9" y1="432.50" x2="1101.4" y2="432.50" stroke="#878787" stroke-width="1"/><text x="352.5" y="436.85" font-family="Liberation Sans" font-size="11" fill="#111" stroke="#111" stroke-width="0.15" text-anchor="end">1.000,00</text><line x1="359.9" y1="467.50" x2="1101.4" y2="467.50" stroke="#878787" stroke-width="1"/><text x="352.5" y="471.70" font-family="Liberation Sans" font-size="11" fill="#111" stroke="#111" stroke-width="0.15" text-anchor="end">800,00</text><line x1="359.9" y1="502.50" x2="1101.4" y2="502.50" stroke="#878787" stroke-width="1"/><text x="352.5" y="506.55" font-family="Liberation Sans" font-size="11" fill="#111" stroke="#111" stroke-width="0.15" text-anchor="end">600,00</text><line x1="359.9" y1="537.50" x2="1101.4" y2="537.50" stroke="#878787" stroke-width="1"/><text x="352.5" y="541.40" font-family="Liberation Sans" font-size="11" fill="#111" stroke="#111" stroke-width="0.15" text-anchor="end">400,00</text><line x1="359.9" y1="572.50" x2="1101.4" y2="572.50" stroke="#878787" stroke-width="1"/><text x="352.5" y="576.25" font-family="Liberation Sans" font-size="11" fill="#111" stroke="#111" stroke-width="0.15" text-anchor="end">200,00</text><line x1="359.9" y1="607.50" x2="1101.4" y2="607.50" stroke="#878787" stroke-width="1"/><text x="352.5" y="611.10" font-family="Liberation Sans" font-size="11" fill="#111" stroke="#111" stroke-width="0.15" text-anchor="end">0,00</text><line x1="363.9" y1="258.7" x2="363.9" y2="607.2" stroke="#878787" stroke-width="1.2"/><line x1="1101.4" y1="258.7" x2="1101.4" y2="607.2" stroke="#878787" stroke-width="1.1"/><line x1="363.9" y1="607.2" x2="1101.4" y2="607.2" stroke="#878787" stroke-width="1.8"/><line x1="437.65" y1="607.2" x2="437.65" y2="611.7" stroke="#878787" stroke-width="1.1"/><line x1="511.40" y1="607.2" x2="511.40" y2="611.7" stroke="#878787" stroke-width="1.1"/><line x1="585.15" y1="607.2" x2="585.15" y2="611.7" stroke="#878787" stroke-width="1.1"/><line x1="658.90" y1="607.2" x2="658.90" y2="611.7" stroke="#878787" stroke-width="1.1"/><line x1="732.65" y1="607.2" x2="732.65" y2="611.7" stroke="#878787" stroke-width="1.1"/><line x1="806.40" y1="607.2" x2="806.40" y2="611.7" stroke="#878787" stroke-width="1.1"/><line x1="880.15" y1="607.2" x2="880.15" y2="611.7" stroke="#878787" stroke-width="1.1"/><line x1="953.90" y1="607.2" x2="953.90" y2="611.7" stroke="#878787" stroke-width="1.1"/><line x1="1027.65" y1="607.2" x2="1027.65" y2="611.7" stroke="#878787" stroke-width="1.1"/><line x1="1101.40" y1="607.2" x2="1101.40" y2="611.7" stroke="#878787" stroke-width="1.1"/><polyline points="400.07,320.75 473.82,303.01 547.57,335.39 621.33,374.97 695.08,397.99 768.83,392.69 842.58,397.47 916.33,398.64 990.08,401.28 1063.83,436.51" fill="none" stroke="#4a7ebb" stroke-width="3" stroke-linejoin="round"/><path d="M400.07 315.75 L404.68 320.75 L400.07 325.75 L395.47 320.75 Z" fill="#4a7ebb"/><path d="M473.82 298.01 L478.43 303.01 L473.82 308.01 L469.22 303.01 Z" fill="#4a7ebb"/><path d="M547.57 330.39 L552.17 335.39 L547.57 340.39 L542.97 335.39 Z" fill="#4a7ebb"/><path d="M621.33 369.97 L625.93 374.97 L621.33 379.97 L616.73 374.97 Z" fill="#4a7ebb"/><path d="M695.08 392.99 L699.68 397.99 L695.08 402.99 L690.48 397.99 Z" fill="#4a7ebb"/><path d="M768.83 387.69 L773.43 392.69 L768.83 397.69 L764.23 392.69 Z" fill="#4a7ebb"/><path d="M842.58 392.47 L847.18 397.47 L842.58 402.47 L837.98 397.47 Z" fill="#4a7ebb"/><path d="M916.33 393.64 L920.93 398.64 L916.33 403.64 L911.73 398.64 Z" fill="#4a7ebb"/><path d="M990.08 396.28 L994.68 401.28 L990.08 406.28 L985.48 401.28 Z" fill="#4a7ebb"/><path d="M1063.83 431.51 L1068.42 436.51 L1063.83 441.51 L1059.23 436.51 Z" fill="#4a7ebb"/><rect x="395.17" y="601.80" width="9.6" height="9.2" fill="#c0504d"/><rect x="468.92" y="601.80" width="9.6" height="9.2" fill="#c0504d"/><rect x="542.68" y="601.80" width="9.6" height="9.2" fill="#c0504d"/><rect x="616.43" y="601.80" width="9.6" height="9.2" fill="#c0504d"/><rect x="690.18" y="601.80" width="9.6" height="9.2" fill="#c0504d"/><rect x="763.93" y="601.80" width="9.6" height="9.2" fill="#c0504d"/><rect x="837.68" y="601.80" width="9.6" height="9.2" fill="#c0504d"/><rect x="911.43" y="601.80" width="9.6" height="9.2" fill="#c0504d"/><rect x="985.18" y="601.80" width="9.6" height="9.2" fill="#c0504d"/><rect x="1058.93" y="601.80" width="9.6" height="9.2" fill="#c0504d"/><line x1="363.9" y1="607.2" x2="1101.4" y2="607.2" stroke="#878787" stroke-width="1.2" opacity="0.7"/><text x="400.77" y="627" font-family="Liberation Sans" font-size="10.7" fill="#111" stroke="#111" stroke-width="0.15" text-anchor="middle">Jahr 00 /FL</text><text x="474.52" y="627" font-family="Liberation Sans" font-size="10.7" fill="#111" stroke="#111" stroke-width="0.15" text-anchor="middle">Jahr 01 /FL</text><text x="548.27" y="627" font-family="Liberation Sans" font-size="10.7" fill="#111" stroke="#111" stroke-width="0.15" text-anchor="middle">Jahr 02 /FL</text><text x="622.03" y="627" font-family="Liberation Sans" font-size="10.7" fill="#111" stroke="#111" stroke-width="0.15" text-anchor="middle">Jahr 03 /FL</text><text x="695.78" y="627" font-family="Liberation Sans" font-size="10.7" fill="#111" stroke="#111" stroke-width="0.15" text-anchor="middle">Jahr 04 /FL</text><text x="769.53" y="627" font-family="Liberation Sans" font-size="10.7" fill="#111" stroke="#111" stroke-width="0.15" text-anchor="middle">Jahr 05 /FL</text><text x="843.28" y="627" font-family="Liberation Sans" font-size="10.7" fill="#111" stroke="#111" stroke-width="0.15" text-anchor="middle">Jahr 06 /FL</text><text x="917.03" y="627" font-family="Liberation Sans" font-size="10.7" fill="#111" stroke="#111" stroke-width="0.15" text-anchor="middle">Jahr 07 /FL</text><text x="990.78" y="627" font-family="Liberation Sans" font-size="10.7" fill="#111" stroke="#111" stroke-width="0.15" text-anchor="middle">Jahr 08 /FL</text><text x="1064.53" y="627" font-family="Liberation Sans" font-size="10.7" fill="#111" stroke="#111" stroke-width="0.15" text-anchor="middle">Jahr 09 /FL</text><circle cx="363.9" cy="258.7" r="4.2" fill="#dff1f6" stroke="#6a8a98" stroke-width="1"/><circle cx="1101.4" cy="258.7" r="4.2" fill="#dff1f6" stroke="#6a8a98" stroke-width="1"/><circle cx="363.9" cy="607.2" r="4.2" fill="#dff1f6" stroke="#6a8a98" stroke-width="1"/><circle cx="1101.4" cy="607.2" r="4.2" fill="#dff1f6" stroke="#6a8a98" stroke-width="1"/><rect x="729.15" y="255.20" width="7" height="7" fill="#dff1f6" stroke="#5a88b0" stroke-width="1"/><rect x="360.40" y="429.45" width="7" height="7" fill="#dff1f6" stroke="#5a88b0" stroke-width="1"/><rect x="1097.90" y="429.45" width="7" height="7" fill="#dff1f6" stroke="#5a88b0" stroke-width="1"/><rect x="729.15" y="603.70" width="7" height="7" fill="#dff1f6" stroke="#5a88b0" stroke-width="1"/><line x1="457.2" y1="649.6" x2="483.4" y2="649.6" stroke="#4a7ebb" stroke-width="3"/><path d="M470.3 645 L474.9 649.6 L470.3 654.2 L465.7 649.6 Z" fill="#4a7ebb"/><text x="484.3" y="654.4" font-family="Liberation Sans" font-size="11.3" fill="#111" stroke="#111" stroke-width="0.12" textLength="198.8" lengthAdjust="spacingAndGlyphs">2103.20.01.413.01.10.000.000.P037.01</text><line x1="718" y1="650" x2="743.9" y2="650" stroke="#c0504d" stroke-width="3"/><rect x="726.8" y="645.4" width="9" height="9" fill="#c0504d"/><text x="745.3" y="654.6" font-family="Liberation Sans" font-size="11.3" fill="#111" stroke="#111" stroke-width="0.12" textLength="215" lengthAdjust="spacingAndGlyphs">2103.20.01.413.02.10.000.000.P037.01.LG</text></svg>
<div style="left:8.00px;top:689.80px;width:1304.00px;height:15.00px;background:#dde2e9"></div>
<div style="left:8.00px;top:689.80px;width:60.00px;height:1.00px;background:#b9bec5"></div>
<div style="left:8.50px;top:690.30px;width:59.50px;height:14.20px;background:#dfe3e9;border-top:1px solid #c2c7ce;border-right:1px solid #c2c7ce;box-sizing:border-box"></div>
<svg style="left:14px;top:693px;" width="8" height="9" viewBox="0 0 8 9"><rect x="1" y="0.5" width="1.5" height="7" fill="#3a3a3a"/><path d="M7 0.5 V7.5 L3 4 Z" fill="#3a3a3a"/></svg>
<svg style="left:29px;top:693px;" width="6" height="9" viewBox="0 0 6 9"><path d="M5 0.5 V7.5 L1 4 Z" fill="#3a3a3a"/></svg>
<svg style="left:42px;top:693px;" width="6" height="9" viewBox="0 0 6 9"><path d="M1 0.5 V7.5 L5 4 Z" fill="#3a3a3a"/></svg>
<svg style="left:55px;top:693px;" width="8" height="9" viewBox="0 0 8 9"><path d="M0.5 0.5 V7.5 L4.5 4 Z" fill="#3a3a3a"/><rect x="5" y="0.5" width="1.5" height="7" fill="#3a3a3a"/></svg>
<svg style="left:0;top:0" width="1328" height="711"><polygon points="68,690 133.3,690 121.3,704.6 68,704.6" fill="#fff"/><line x1="121.3" y1="704.5" x2="133.3" y2="690.5" stroke="#8d9299" stroke-width="0.9"/><line x1="133.3" y1="690.5" x2="188.0" y2="690.5" stroke="#a9aeb5" stroke-width="1"/><line x1="176.0" y1="704.5" x2="188.0" y2="690.5" stroke="#8d9299" stroke-width="0.9"/><line x1="188.0" y1="690.5" x2="233.0" y2="690.5" stroke="#a9aeb5" stroke-width="1"/><line x1="221.0" y1="704.5" x2="233.0" y2="690.5" stroke="#8d9299" stroke-width="0.9"/><line x1="233.0" y1="690.5" x2="278.0" y2="690.5" stroke="#a9aeb5" stroke-width="1"/><line x1="266.0" y1="704.5" x2="278.0" y2="690.5" stroke="#8d9299" stroke-width="0.9"/><line x1="278.0" y1="690.5" x2="321.8" y2="690.5" stroke="#a9aeb5" stroke-width="1"/><line x1="309.8" y1="704.5" x2="321.8" y2="690.5" stroke="#8d9299" stroke-width="0.9"/><line x1="321.8" y1="690.5" x2="367.3" y2="690.5" stroke="#a9aeb5" stroke-width="1"/><line x1="355.3" y1="704.5" x2="367.3" y2="690.5" stroke="#8d9299" stroke-width="0.9"/><line x1="367.3" y1="690.5" x2="412.0" y2="690.5" stroke="#a9aeb5" stroke-width="1"/><line x1="400.0" y1="704.5" x2="412.0" y2="690.5" stroke="#8d9299" stroke-width="0.9"/><line x1="412.0" y1="690.5" x2="457.6" y2="690.5" stroke="#a9aeb5" stroke-width="1"/><line x1="445.6" y1="704.5" x2="457.6" y2="690.5" stroke="#8d9299" stroke-width="0.9"/><line x1="457.6" y1="690.5" x2="502.0" y2="690.5" stroke="#a9aeb5" stroke-width="1"/><line x1="490.0" y1="704.5" x2="502.0" y2="690.5" stroke="#8d9299" stroke-width="0.9"/><line x1="502.0" y1="690.5" x2="547.5" y2="690.5" stroke="#a9aeb5" stroke-width="1"/><line x1="535.5" y1="704.5" x2="547.5" y2="690.5" stroke="#8d9299" stroke-width="0.9"/><line x1="547.5" y1="690.5" x2="592.2" y2="690.5" stroke="#a9aeb5" stroke-width="1"/><line x1="580.2" y1="704.5" x2="592.2" y2="690.5" stroke="#8d9299" stroke-width="0.9"/><line x1="592.2" y1="690.5" x2="636.5" y2="690.5" stroke="#a9aeb5" stroke-width="1"/><line x1="624.5" y1="704.5" x2="636.5" y2="690.5" stroke="#8d9299" stroke-width="0.9"/><line x1="636.5" y1="690.5" x2="690.4" y2="690.5" stroke="#a9aeb5" stroke-width="1"/><line x1="678.4" y1="704.5" x2="690.4" y2="690.5" stroke="#8d9299" stroke-width="0.9"/><line x1="690.4" y1="690.5" x2="757.9" y2="690.5" stroke="#a9aeb5" stroke-width="1"/><line x1="745.9" y1="704.5" x2="757.9" y2="690.5" stroke="#8d9299" stroke-width="0.9"/><line x1="757.9" y1="690.5" x2="790.0" y2="690.5" stroke="#a9aeb5" stroke-width="1"/></svg>
<span style="left:76.60px;top:691.99px;font-size:11.5px;line-height:12.85px;color:#2a3548;white-space:nowrap;font-weight:bold;transform:scaleX(1.0290);transform-origin:0 0;">Format</span>
<span style="left:133.70px;top:692.44px;font-size:11px;line-height:12.29px;color:#3a4258;white-space:nowrap;transform:scaleX(1.0029);transform-origin:0 0;">Header</span>
<span style="left:189.00px;top:692.44px;font-size:11px;line-height:12.29px;color:#3a4258;white-space:nowrap;transform:scaleX(1.0217);transform-origin:0 0;">Pivot</span>
<span style="left:234.00px;top:692.44px;font-size:11px;line-height:12.29px;color:#3a4258;white-space:nowrap;transform:scaleX(0.9448);transform-origin:0 0;">Sub1</span>
<span style="left:279.00px;top:692.44px;font-size:11px;line-height:12.29px;color:#3a4258;white-space:nowrap;transform:scaleX(0.9721);transform-origin:0 0;">Sub2</span>
<span style="left:322.80px;top:692.44px;font-size:11px;line-height:12.29px;color:#3a4258;white-space:nowrap;transform:scaleX(1.0459);transform-origin:0 0;">Sub3</span>
<span style="left:368.30px;top:692.44px;font-size:11px;line-height:12.29px;color:#3a4258;white-space:nowrap;transform:scaleX(1.0148);transform-origin:0 0;">Sub4</span>
<span style="left:413.00px;top:692.44px;font-size:11px;line-height:12.29px;color:#3a4258;white-space:nowrap;transform:scaleX(1.0343);transform-origin:0 0;">Sub5</span>
<span style="left:458.60px;top:692.44px;font-size:11px;line-height:12.29px;color:#3a4258;white-space:nowrap;">Sub6</span>
<span style="left:503.00px;top:692.44px;font-size:11px;line-height:12.29px;color:#3a4258;white-space:nowrap;transform:scaleX(0.9954);transform-origin:0 0;">Sub7</span>
<span style="left:548.50px;top:692.44px;font-size:11px;line-height:12.29px;color:#3a4258;white-space:nowrap;">Sub8</span>
<span style="left:593.20px;top:692.44px;font-size:11px;line-height:12.29px;color:#3a4258;white-space:nowrap;">Sub9</span>
<span style="left:637.50px;top:692.44px;font-size:11px;line-height:12.29px;color:#3a4258;white-space:nowrap;transform:scaleX(1.0426);transform-origin:0 0;">Sub10</span>
<span style="left:691.40px;top:692.44px;font-size:11px;line-height:12.29px;color:#3a4258;white-space:nowrap;transform:scaleX(1.0077);transform-origin:0 0;">RawData</span>
<span style="left:758.90px;top:692.44px;font-size:11px;line-height:12.29px;color:#3a4258;white-space:nowrap;transform:scaleX(1.0500);transform-origin:0 0;">Raw</span>
<div style="left:782.50px;top:691.00px;width:6.00px;height:13.00px;background:#fff;border:1px solid #8a8f96;box-sizing:border-box"></div>
<svg style="left:793px;top:692.5px;" width="8" height="10" viewBox="0 0 8 10"><path d="M6.5 1 L1.5 5 L6.5 9 Z" fill="#444"/></svg>
<div style="left:805.50px;top:690.80px;width:15.00px;height:14.00px;background:linear-gradient(#fafbfc,#e6e9ee);border:1px solid #8a8f96;border-radius:2px;box-sizing:border-box"></div>
<div style="left:810.00px;top:694.00px;width:1.00px;height:7.00px;background:#777"></div>
<div style="left:812.00px;top:694.00px;width:1.00px;height:7.00px;background:#777"></div>
<div style="left:814.00px;top:694.00px;width:1.00px;height:7.00px;background:#777"></div>
<svg style="left:1285px;top:693px;" width="8" height="10" viewBox="0 0 8 10"><path d="M1.5 1 L6.5 5 L1.5 9 Z" fill="#444"/></svg>
<div style="left:1297.30px;top:689.80px;width:14.70px;height:15.00px;background:#dde2e9"></div>
<div style="left:6.00px;top:705.00px;width:1309.00px;height:2.50px;background:#5f6266"></div>
<div style="left:1297.30px;top:165.60px;width:14.70px;height:524.20px;background:#dde2e9;border-left:1px solid #cdd2d9;box-sizing:border-box"></div>
<svg style="left:1299px;top:170px;" width="11" height="7" viewBox="0 0 11 7"><path d="M1 6 L5.2 1.2 L9.4 6 Z" fill="#3e3e3e"/></svg>
<div style="left:1298.00px;top:182.00px;width:13.20px;height:477.00px;background:linear-gradient(90deg,#e9edf3,#fbfcfd 60%,#e3e7ed);border:1px solid #8e939a;border-radius:2px;box-sizing:border-box"></div>
<div style="left:1301.00px;top:417.00px;width:8.00px;height:1.00px;background:#6a6e74"></div>
<div style="left:1301.00px;top:419.00px;width:8.00px;height:1.00px;background:#6a6e74"></div>
<div style="left:1301.00px;top:421.00px;width:8.00px;height:1.00px;background:#6a6e74"></div>
<div style="left:1301.00px;top:423.00px;width:8.00px;height:1.00px;background:#6a6e74"></div>
<svg style="left:1299px;top:679px;" width="11" height="7" viewBox="0 0 11 7"><path d="M1 1 L5.2 5.8 L9.4 1 Z" fill="#3e3e3e"/></svg>
</body></html>
